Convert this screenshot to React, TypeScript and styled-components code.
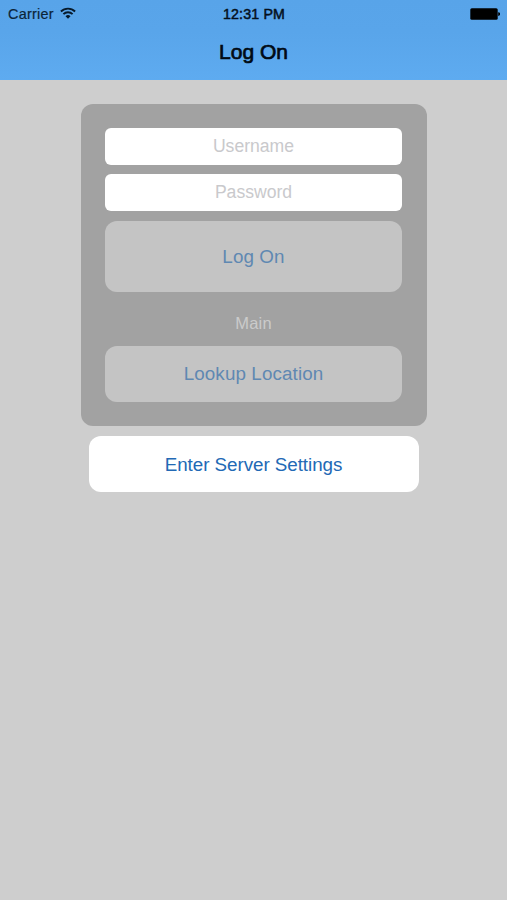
import React from "react";
import styled, { createGlobalStyle } from "styled-components";

const GlobalStyle = createGlobalStyle`
  *, *::before, *::after { box-sizing: border-box; }
  body {
    margin: 0;
    background: #cecece;
    font-family: "Helvetica Neue", "Liberation Sans", Arial, sans-serif;
  }
  button, input { font-family: inherit; }
`;

const Screen = styled.div`
  min-height: 900px;
  background: #cecece;
`;

const Header = styled.header`
  height: 79.5px;
  color: #04101c;
  background: linear-gradient(#58a4e9, #59a5ea 40%, #5eabf0);
`;

const StatusBar = styled.div`
  display: grid;
  grid-template-columns: 1fr auto 1fr;
  align-items: center;
  height: 27px;
  padding: 0 7px 0 8px;
`;

const Carrier = styled.div`
  display: flex;
  align-items: center;
  gap: 6px;
  font-size: 14.4px;
  letter-spacing: 0.25px;
  color: #0c2438;
  -webkit-text-stroke: 0.2px currentColor;
`;

const Time = styled.div`
  font-size: 14.2px;
  letter-spacing: 0.15px;
  -webkit-text-stroke: 0.5px currentColor;
`;

const Wifi = styled.svg`
  display: block;
  margin-bottom: 2px;
`;

const Battery = styled.svg`
  justify-self: end;
  display: block;
`;

const Title = styled.h1`
  margin: 0;
  height: 49px;
  text-align: center;
  font-size: 21px;
  font-weight: 400;
  line-height: 49px;
  color: #000a14;
  -webkit-text-stroke: 0.7px currentColor;
`;

const Main = styled.main`
  display: flex;
  flex-direction: column;
  align-items: center;
  gap: 10px;
  padding-top: 24px;
`;

const Card = styled.form`
  display: flex;
  flex-direction: column;
  width: 346px;
  height: 322.5px;
  padding: 24.3px 24.3px 0;
  border-radius: 12px;
  background: #a2a2a2;
`;

const Field = styled.input`
  width: 100%;
  height: 37px;
  margin: 0 0 9.5px;
  padding: 0;
  border: 0;
  border-radius: 6px;
  background: #fff;
  text-align: center;
  font-size: 17.6px;
  outline: none;
  &::placeholder { color: #c9c9cc; opacity: 1; }
`;

const Button = styled.button<{ $height: number; $muted?: boolean }>`
  flex: none;
  width: ${(p) => (p.$muted ? "100%" : "330px")};
  height: ${(p) => p.$height}px;
  padding: 1px 0 0;
  border: 0;
  border-radius: 12px;
  font-size: 18.8px;
  letter-spacing: ${(p) => (p.$muted ? "0.12px" : "-0.04px")};
  background: ${(p) => (p.$muted ? "#c4c4c4" : "#fff")};
  color: ${(p) => (p.$muted ? "#5f88b2" : "#2269b5")};
`;

const Location = styled.p`
  flex: none;
  margin: 0;
  height: 54px;
  line-height: 62px;
  text-align: center;
  font-size: 16.5px;
  letter-spacing: 0.2px;
  color: #cbcbcb;
`;

function WifiIcon() {
  return (
    <Wifi width="16" height="12" viewBox="0 0 16 12" fill="none" stroke="#071a2b" strokeWidth="1.9">
      <path d="M.9 4.5a10.2 10.2 0 0 1 14.2 0" />
      <path d="M3.4 7.2a6.5 6.5 0 0 1 9.2 0" />
      <path d="M5.5 9.2a3.6 3.6 0 0 1 5 0L8 11.8Z" fill="#071a2b" stroke="none" />
    </Wifi>
  );
}

export default function App() {
  return (
    <Screen>
      <GlobalStyle />
      <Header>
        <StatusBar>
          <Carrier>
            <span>Carrier</span>
            <WifiIcon />
          </Carrier>
          <Time>12:31 PM</Time>
          <Battery width="30" height="12" viewBox="0 0 30 12">
            <rect x="0.3" y="0.3" width="27.4" height="11.4" rx="1.5" fill="#000" />
            <path d="M28.2 4.2a1.9 1.9 0 0 1 0 3.8Z" fill="#000" />
          </Battery>
        </StatusBar>
        <Title>Log On</Title>
      </Header>
      <Main>
        <Card onSubmit={(e) => e.preventDefault()}>
          <Field placeholder="Username" />
          <Field type="password" placeholder="Password" />
          <Button type="submit" $height={71} $muted>Log On</Button>
          <Location>Main</Location>
          <Button type="button" $height={56.3} $muted>Lookup Location</Button>
        </Card>
        <Button type="button" $height={56}>Enter Server Settings</Button>
      </Main>
    </Screen>
  );
}
